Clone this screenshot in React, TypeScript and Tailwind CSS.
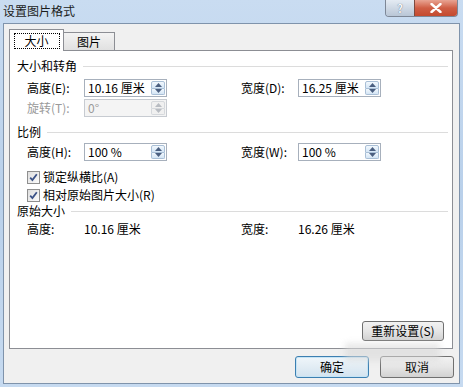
import React from 'react';

const font = "font-['Noto_Sans_CJK_SC','Liberation_Sans',sans-serif]";

function Arrow({ up, disabled }: { up?: boolean; disabled?: boolean }) {
  return (
    <svg width="7" height="4" viewBox="0 0 7 4">
      <path d={up ? 'M0 4 L3.5 0 L7 4Z' : 'M0 0 L3.5 4 L7 0Z'} fill={disabled ? '#b8bcc2' : '#4b5f80'} />
    </svg>
  );
}

function Spin({ disabled }: { disabled?: boolean }) {
  const half = disabled
    ? 'flex-1 flex items-center justify-center border border-[#d5d8dc] bg-[#f0f0f0]'
    : 'flex-1 flex items-center justify-center border border-[#a9bfd6] bg-linear-to-b from-[#f2f8fd] to-[#d4e5f5]';
  return (
    <div className="flex flex-col w-[15px] h-full py-[1px] pr-[1px]">
      <div className={half + ' rounded-t-[2px]'}>
        <Arrow up disabled={disabled} />
      </div>
      <div className={half + ' rounded-b-[2px] border-t-0'}>
        <Arrow disabled={disabled} />
      </div>
    </div>
  );
}

function Field({ value, disabled }: { value: string; disabled?: boolean }) {
  return (
    <div
      className={
        'flex items-center w-[83px] h-[18px] border ' +
        (disabled ? 'border-[#c7cbd1] bg-[#f4f4f4] text-[#9a9a9a]' : 'border-[#a7b0bc] bg-white text-black')
      }
    >
      <span className="flex-1 pl-[3px] text-[12px] leading-[14px] whitespace-pre">{value}</span>
      <Spin disabled={disabled} />
    </div>
  );
}

function Header({ text }: { text: string }) {
  return (
    <div className="flex items-center h-[14px] pl-[7px] pr-[4px]">
      <span className="text-[12px] leading-[14px]">{text}</span>
      <div className="flex-1 ml-[6px] h-px bg-[#dcdcdc]" />
    </div>
  );
}

function Check({ label }: { label: string }) {
  return (
    <div className="flex items-center h-[16px] pl-[17px]">
      <div className="w-[13px] h-[13px] border border-[#8f8f8f] bg-linear-to-br from-[#dedede] to-[#fbfbfb] p-[1px]">
        <svg width="9" height="9" viewBox="0 0 9 9">
          <path d="M1.2 4.6 L3.4 7 L7.8 1.2" stroke="#3b5287" strokeWidth="1.8" fill="none" />
        </svg>
      </div>
      <span className="ml-[3px] text-[12px] leading-[14px]">{label}</span>
    </div>
  );
}

function Btn({ text, primary, className }: { text: string; primary?: boolean; className?: string }) {
  return (
    <div
      className={
        'flex items-center justify-center rounded-[3px] border text-[12px] leading-[14px] ' +
        (primary
          ? 'border-[#3c7fb1] bg-linear-to-b from-[#f0f6fa] to-[#d3e3ef] shadow-[inset_0_0_0_1px_#c6e4f5] '
          : 'border-[#707070] bg-linear-to-b from-[#f2f2f2] via-[#e6e6e6] to-[#d2d2d2] ') +
        (className ?? '')
      }
    >
      {text}
    </div>
  );
}

export default function App() {
  return (
    <div className={'relative w-[463px] h-[387px] overflow-hidden bg-linear-to-b from-[#c9dcf1] via-[#b9d0ea] to-[#c6daf0] text-black ' + font}>
      {/* title bar */}
      <div className="flex items-start h-[23px] pl-[3px]">
        <span className="mt-[4px] text-[12px] leading-[14px] text-[#1b1b1b]">设置图片格式</span>
        <div className="flex-1" />
        <div className="flex h-[17px] mr-[5px] rounded-b-[4px] overflow-hidden border border-t-0 border-[#7d8796]">
          <div className="w-[28px] flex items-center justify-center bg-linear-to-b from-[#e4ebf3] to-[#b9c6d6] text-[11px] font-bold text-[#f6f8fb] [text-shadow:0_0_1px_#3f4d62]">
            ?
          </div>
          <div className="w-[43px] flex items-center justify-center bg-linear-to-b from-[#e8a493] via-[#cf5e45] to-[#c44a2e] border-l border-[#7d4a3f]">
            <svg width="12" height="10" viewBox="0 0 12 10">
              <path d="M1.5 1 L10.5 9 M10.5 1 L1.5 9" stroke="#ffffff" strokeWidth="2.4" strokeLinecap="round" />
            </svg>
          </div>
        </div>
      </div>

      {/* client area */}
      <div className="mx-[3px] h-[361px] border border-[#7f93ab] bg-[#f0f0f0] pl-[5px] pt-[5px]">
        {/* tabs */}
        <div className="flex items-end h-[21px]">
          <div className="relative z-10 w-[55px] h-[22px] -mb-[1px] border border-b-0 border-[#8c8e94] bg-white flex items-center justify-center">
            <span className="w-[46px] text-center border border-dotted border-black text-[12px] leading-[14px]">大小</span>
          </div>
          <div className="w-[51px] h-[18px] border border-l-0 border-b-0 border-[#8c8e94] bg-linear-to-b from-[#f3f3f3] to-[#e1e1e1] flex items-center justify-center text-[12px] leading-[14px]">
            图片
          </div>
        </div>

        {/* panel */}
        <div className="flex flex-col w-[444px] h-[299px] border border-[#8c8e94] bg-white">
          <div className="mt-[8px]">
            <Header text="大小和转角" />
          </div>
          <div className="flex items-center mt-[6px] h-[18px] pl-[17px] text-[12px] leading-[14px]">
            <span className="w-[57px]">高度(E):</span>
            <Field value="10.16 厘米" />
            <span className="w-[57px] ml-[74px]">宽度(D):</span>
            <Field value="16.25 厘米" />
          </div>
          <div className="flex items-center mt-[2px] h-[18px] pl-[17px] text-[12px] leading-[14px]">
            <span className="w-[57px] text-[#9a9a9a]">旋转(T):</span>
            <Field value="0°" disabled />
          </div>
          <div className="mt-[8px]">
            <Header text="比例" />
          </div>
          <div className="flex items-center mt-[4px] h-[18px] pl-[17px] text-[12px] leading-[14px]">
            <span className="w-[57px]">高度(H):</span>
            <Field value="100 %" />
            <span className="w-[57px] ml-[74px]">宽度(W):</span>
            <Field value="100 %" />
          </div>
          <div className="mt-[8px]">
            <Check label="锁定纵横比(A)" />
          </div>
          <div className="mt-[2px]">
            <Check label="相对原始图片大小(R)" />
          </div>
          <div className="mt-[1px]">
            <Header text="原始大小" />
          </div>
          <div className="flex items-center mt-[4px] h-[14px] pl-[17px] text-[12px] leading-[14px]">
            <span className="w-[57px]">高度:</span>
            <span className="w-[157px]">10.16 厘米</span>
            <span className="w-[57px]">宽度:</span>
            <span>16.26 厘米</span>
          </div>
          <div className="flex-1" />
          <div className="flex justify-end pr-[8px] mb-[7px]">
            <Btn text="重新设置(S)" className="w-[82px] h-[20px]" />
          </div>
        </div>

        {/* dialog buttons */}
        <div className="flex justify-end gap-[11px] mt-[7px] pr-[5px]">
          <Btn text="确定" primary className="w-[74px] h-[22px]" />
          <Btn text="取消" className="w-[74px] h-[22px]" />
        </div>
      </div>

      {/* faint blur smudge over the lower right */}
      <div className="absolute left-[345px] top-[343px] w-[95px] h-[18px] bg-[#d9d9d9] opacity-60 blur-[3px]" />
    </div>
  );
}
